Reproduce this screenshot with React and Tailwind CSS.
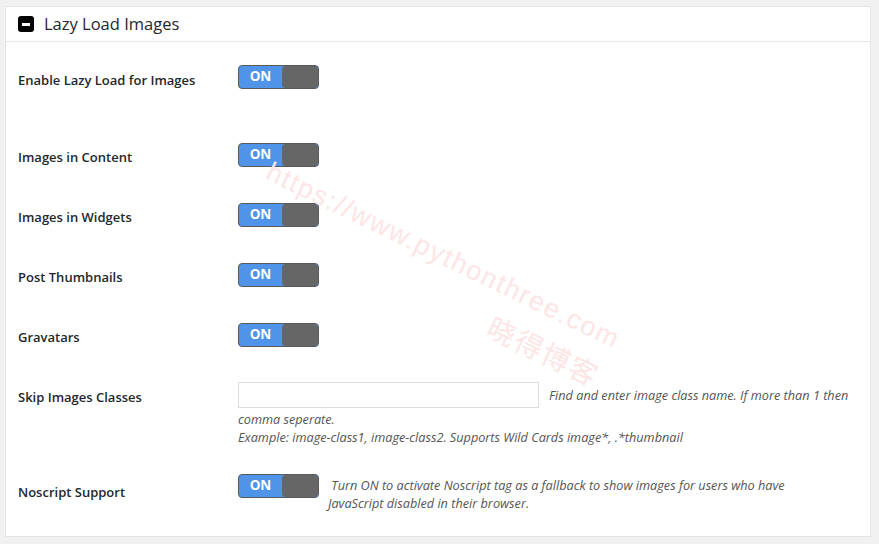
import React from "react";

function Toggle() {
  return (
    <div className="relative flex h-[24px] w-[81px] shrink-0 overflow-hidden rounded-[4px] border border-[#5a5a5a] bg-[#4f94e8]">
      <div className="flex w-[43px] items-center justify-center text-[13.5px] font-bold leading-none text-white">ON</div>
      <div className="flex-1 rounded-[4px] bg-[#666666]" />
    </div>
  );
}

function Row({ label, h, children, labelMt = "mt-[5px]" }) {
  return (
    <div className={`flex items-start ${h}`}>
      <div className={`w-[232px] shrink-0 pl-[12px] text-[13px] font-semibold leading-[20px] text-[#23282d] ${labelMt}`}>
        {label}
      </div>
      {children}
    </div>
  );
}

export default function App() {
  return (
    <div
      className="relative min-h-[544px] w-[879px] bg-[#f1f1f1] pt-[6px] pl-[5px] pr-[8px] pb-[7px]"
      style={{ fontFamily: '"Open Sans", "Noto Sans", sans-serif' }}
    >
      <div className="h-[531px] border border-[#e5e5e5] bg-white">
        <div className="flex h-[35px] items-center gap-[10px] border-b border-[#e5e5e5] pl-[12px]">
          <div className="flex h-[16px] w-[16px] items-center justify-center rounded-[3px] bg-black">
            <div className="h-[3px] w-[8px] bg-white" />
          </div>
          <div className="text-[16.5px] leading-none text-[#23282d]">Lazy Load Images</div>
        </div>
        <div className="pt-[23px]">
          <Row label="Enable Lazy Load for Images" h="h-[78px]">
            <Toggle />
          </Row>
          <Row label="Images in Content" h="h-[60px]" labelMt="mt-[4px]">
            <Toggle />
          </Row>
          <Row label="Images in Widgets" h="h-[60px]" labelMt="mt-[4px]">
            <Toggle />
          </Row>
          <Row label="Post Thumbnails" h="h-[60px]" labelMt="mt-[4px]">
            <Toggle />
          </Row>
          <Row label="Gravatars" h="h-[59px]" labelMt="mt-[4px]">
            <Toggle />
          </Row>
          <Row label="Skip Images Classes" h="h-[92px]">
            <div className="w-[622px] text-[12.7px] italic leading-[18px] text-[#555]">
              <input
                type="text"
                className="mr-[10px] h-[26px] w-[301px] border border-[#dddddd] bg-white align-middle outline-none"
              />
              <span className="align-middle">Find and enter image class name. If more than 1 then comma seperate.</span>
              <br />
              Example: image-class1, image-class2. Supports Wild Cards image*, .*thumbnail
            </div>
          </Row>
          <Row label="Noscript Support" h="h-[60px]" labelMt="mt-[8px]">
            <Toggle />
            <div className="ml-[9px] mt-[2px] w-[500px] text-[12.7px] italic leading-[18px] text-[#555]">
              &nbsp;Turn ON to activate Noscript tag as a fallback to show images for users who have JavaScript disabled in their browser.
            </div>
          </Row>
        </div>
      </div>
      <div
        className="pointer-events-none absolute left-[268px] top-[150px] origin-left rotate-[26deg] whitespace-nowrap text-[27px] tracking-[1.6px] text-[#fde5e5]"
        style={{ fontFamily: '"Liberation Sans", sans-serif' }}
      >
        https://www.pythonthree.com
      </div>
      <div
        className="pointer-events-none absolute left-[490px] top-[303px] origin-left rotate-[26deg] whitespace-nowrap text-[28px] tracking-[2px] text-[#fde5e5]"
        style={{ fontFamily: '"Noto Sans CJK SC", sans-serif' }}
      >
        晓得博客
      </div>
    </div>
  );
}
